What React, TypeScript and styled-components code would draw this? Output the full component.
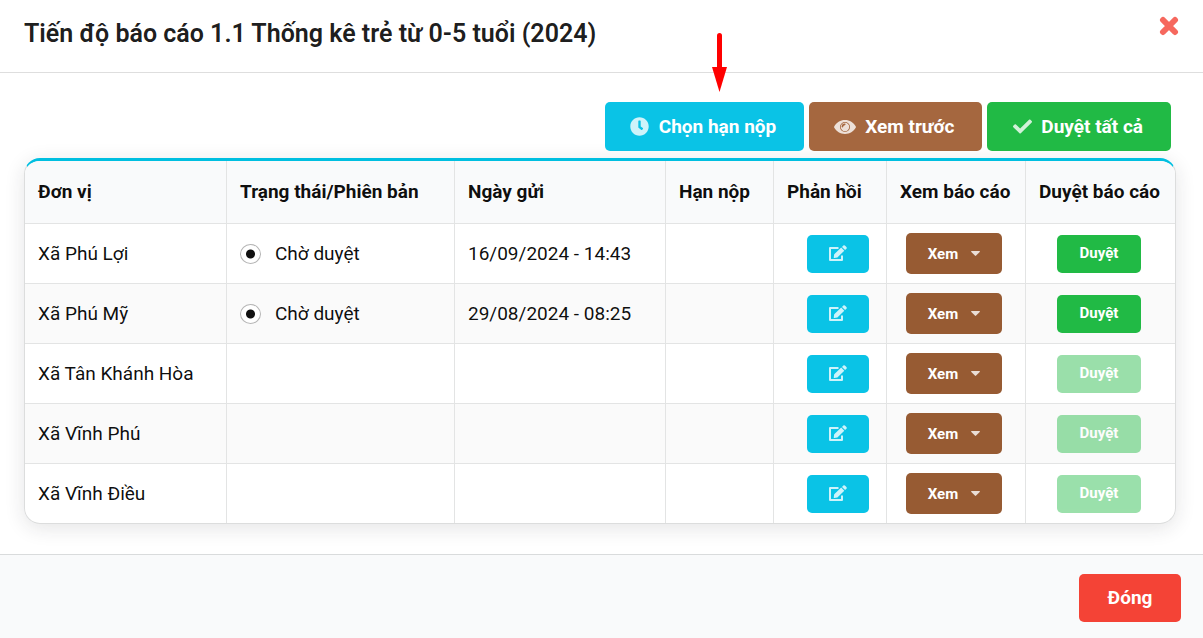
import React from "react";
import styled, { createGlobalStyle, css } from "styled-components";
import { FaCheck, FaClock } from "react-icons/fa";

const GlobalStyle = createGlobalStyle`
  *, *::before, *::after { box-sizing: border-box; }
  html, body, #root { height: 100%; }
  body {
    margin: 0;
    background: #fff;
    color: rgba(0, 0, 0, 0.95);
    font-family: Roboto, "Liberation Sans", sans-serif;
    font-size: 19px;
  }
  button { font-family: inherit; cursor: pointer; }
`;

const Modal = styled.div`
  display: flex;
  flex-direction: column;
  min-height: 100%;
`;

const Header = styled.header`
  display: flex;
  align-items: flex-start;
  justify-content: space-between;
  padding: 16px 24px 20px;
  border-bottom: 1px solid #dedede;
`;

const Title = styled.h1`
  margin: 0;
  font-size: 25px;
  line-height: 36px;
  font-weight: 600;
  color: rgba(0, 0, 0, 0.9);
`;

const CloseButton = styled.button`
  display: flex;
  padding: 0;
  border: 0;
  background: none;
  color: #f44336;
  opacity: 0.8;
`;

const Content = styled.main`
  padding: 29px 27px 30px 24px;
`;

const Toolbar = styled.div`
  display: flex;
  justify-content: flex-end;
  gap: 5px;
  padding-right: 5px;
  margin-bottom: 7px;
`;

type Tone = "cyan" | "sienna" | "brown" | "green" | "red";

const tones: Record<Tone, string> = {
  cyan: "#0ac3e6",
  sienna: "#a5673f",
  brown: "#975b33",
  green: "#21ba45",
  red: "#f44336",
};

const Button = styled.button<{ $tone: Tone; $size?: "small" | "large" }>`
  position: relative;
  display: inline-flex;
  align-items: center;
  justify-content: center;
  border: 0;
  border-radius: 5px;
  background: ${(p) => tones[p.$tone]};
  color: #fff;
  font-weight: 700;
  ${(p) =>
    p.$size === "small"
      ? css`
          height: 38px;
          padding: 0 22px;
          font-size: 15px;
        `
      : css`
          height: 49px;
          padding: 0 28px 0 25px;
          font-size: 19px;
        `}
  &:disabled { opacity: 0.45; }
`;

const ButtonIcon = styled.span`
  display: inline-flex;
  justify-content: center;
  min-width: 20px;
  margin-right: 9px;
  opacity: 0.8;
`;

const Pointer = styled.svg`
  position: absolute;
  left: 107px;
  top: -69px;
`;

const TableFrame = styled.div`
  overflow: hidden;
  border: 1px solid #dcdddd;
  border-top: 3px solid #00bfe0;
  border-radius: 16px;
  box-shadow: 0 4px 20px rgba(34, 36, 38, 0.12);
`;

const Table = styled.table`
  width: 100%;
  table-layout: fixed;
  border-collapse: separate;
  border-spacing: 0;
`;

const HeadCell = styled.th`
  height: 62px;
  padding: 0 0 2px 13px;
  background: #f9fafb;
  text-align: left;
  font-weight: 700;
  white-space: nowrap;
  & + & { border-left: 1px solid #e3e4e4; }
`;

const Row = styled.tr`
  &:nth-child(even) { background: #fafafa; }
`;

const Cell = styled.td<{ $center?: boolean }>`
  height: 60px;
  padding: ${(p) => (p.$center ? "0" : "0 0 1px 13px")};
  border-top: 1px solid #e3e4e4;
  text-align: ${(p) => (p.$center ? "center" : "left")};
  vertical-align: middle;
  white-space: nowrap;
  & + & { border-left: 1px solid #e3e4e4; }
`;

const Actions = styled.div<{ $shift?: boolean }>`
  display: flex;
  justify-content: center;
  padding-left: ${(p) => (p.$shift ? "16px" : "0")};
`;

const EditButton = styled(Button)`
  width: 62px;
  padding: 0 0 2px;
  svg { opacity: 0.8; }
`;

const ViewButton = styled(Button)`
  height: 41px;
  gap: 13px;
  margin-right: 4px;
`;

const ApproveButton = styled(Button)`
  width: 84px;
  padding: 0 0 1px;
  margin-right: 3px;
`;

const Caret = styled.svg`
  opacity: 0.8;
`;

const RadioLabel = styled.label`
  display: inline-flex;
  align-items: center;
  gap: 14px;
  vertical-align: middle;
`;

const Radio = styled.input`
  appearance: none;
  width: 21px;
  height: 20px;
  margin: 1px 0 0;
  border: 1px solid #b5b5b5;
  border-radius: 50%;
  background: #fff radial-gradient(circle, #111 0 4px, transparent 5px);
`;

const Footer = styled.footer`
  display: flex;
  flex: 1;
  align-items: flex-start;
  justify-content: flex-end;
  padding: 19px 22px 16px;
  border-top: 1px solid #d9dbdc;
  background: #f9fafb;
`;

const FooterButton = styled(Button)`
  height: 48px;
  min-width: 102px;
  padding: 0 28px 1px;
`;

interface Unit {
  name: string;
  sent?: string;
}

const units: Unit[] = [
  { name: "Xã Phú Lợi", sent: "16/09/2024 - 14:43" },
  { name: "Xã Phú Mỹ", sent: "29/08/2024 - 08:25" },
  { name: "Xã Tân Khánh Hòa" },
  { name: "Xã Vĩnh Phú" },
  { name: "Xã Vĩnh Điều" },
];

const columns = [
  { label: "Đơn vị", width: 201 },
  { label: "Trạng thái/Phiên bản", width: 228 },
  { label: "Ngày gửi", width: 211 },
  { label: "Hạn nộp", width: 108 },
  { label: "Phản hồi", width: 113 },
  { label: "Xem báo cáo", width: 139 },
  { label: "Duyệt báo cáo", width: 150 },
];

function EyeIcon() {
  return (
    <svg width="22" height="16" viewBox="0 0 22 16" aria-hidden="true">
      <path
        fill="currentColor"
        fillRule="evenodd"
        d="M11 1C6.200 1 2.400 3.600.3 7.200q-.4.800 0 1.600C2.400 12.400 6.200 15 11 15s8.600-2.600 10.700-6.200q.4-.8 0-1.600C19.600 3.600 15.800 1 11 1zM11 3a5 5 0 1 1 0 10a5 5 0 1 1 0-10zM11 3.800a4.200 4.200 0 1 0 0 8.400a4.200 4.200 0 1 0 0-8.400z"
      />
      <path d="M8.400 7.600a2.500 2.500 0 0 1 2.400-2.200" fill="none" stroke="#a5673f" strokeWidth="1.600" strokeLinecap="round" />
    </svg>
  );
}

function EditIcon() {
  return (
    <svg width="18" height="16" viewBox="0 0 18 16" aria-hidden="true">
      <path d="M9.500 3H1V15H13V10.500" fill="none" stroke="currentColor" strokeWidth="2" strokeLinejoin="round" />
      <path
        d="M12.200 2.600l3.100 3.100-6.900 6.700-3.200.5q-.6.100-.5-.5l.5-3.200zM13 1.900l1.300-1.300q.8-.8 1.600 0l1.500 1.500q.8.800 0 1.600L16.100 5z"
        fill="currentColor"
      />
    </svg>
  );
}

function UnitRow({ unit }: { unit: Unit }) {
  return (
    <Row>
      <Cell>{unit.name}</Cell>
      <Cell>
        {unit.sent && (
          <RadioLabel>
            <Radio type="radio" name={unit.name} defaultChecked />
            Chờ duyệt
          </RadioLabel>
        )}
      </Cell>
      <Cell>{unit.sent}</Cell>
      <Cell />
      <Cell $center>
        <Actions $shift>
          <EditButton $tone="cyan" $size="small" aria-label="Phản hồi">
            <EditIcon />
          </EditButton>
        </Actions>
      </Cell>
      <Cell $center>
        <Actions>
          <ViewButton $tone="brown" $size="small">
            Xem
            <Caret width="9" height="5" viewBox="0 0 9 5" aria-hidden="true">
              <path d="M.6 0h7.8q.9.2.3.9L5.1 4.6q-.6.6-1.2 0L.3.9Q-.3.2.6 0z" fill="currentColor" />
            </Caret>
          </ViewButton>
        </Actions>
      </Cell>
      <Cell $center>
        <Actions>
          <ApproveButton $tone="green" $size="small" disabled={!unit.sent}>
            Duyệt
          </ApproveButton>
        </Actions>
      </Cell>
    </Row>
  );
}

export default function App() {
  return (
    <Modal>
      <GlobalStyle />
      <Header>
        <Title>Tiến độ báo cáo 1.1 Thống kê trẻ từ 0-5 tuổi (2024)</Title>
        <CloseButton aria-label="Close">
          <svg width="20" height="20" viewBox="0 0 20 20" aria-hidden="true">
            <path d="M4 4l12 12M16 4L4 16" stroke="currentColor" strokeWidth="6" strokeLinecap="round" />
          </svg>
        </CloseButton>
      </Header>
      <Content>
        <Toolbar>
          <Button $tone="cyan">
            <ButtonIcon><FaClock size={19} /></ButtonIcon>
            Chọn hạn nộp
            <Pointer width="15" height="59" viewBox="0 0 15 59" aria-hidden="true">
              <path d="M7.5 2.5V38" stroke="#f00" strokeWidth="5" strokeLinecap="round" />
              <path d="M0 34h15L7.5 59z" fill="#f00" />
            </Pointer>
          </Button>
          <Button $tone="sienna">
            <ButtonIcon><EyeIcon /></ButtonIcon>
            Xem trước
          </Button>
          <Button $tone="green">
            <ButtonIcon><FaCheck size={19} /></ButtonIcon>
            Duyệt tất cả
          </Button>
        </Toolbar>
        <TableFrame>
          <Table>
            <colgroup>
              {columns.map((c) => <col key={c.label} width={c.width} />)}
            </colgroup>
            <thead>
              <tr>
                {columns.map((c) => <HeadCell key={c.label} scope="col">{c.label}</HeadCell>)}
              </tr>
            </thead>
            <tbody>
              {units.map((u) => <UnitRow key={u.name} unit={u} />)}
            </tbody>
          </Table>
        </TableFrame>
      </Content>
      <Footer>
        <FooterButton $tone="red">Đóng</FooterButton>
      </Footer>
    </Modal>
  );
}
